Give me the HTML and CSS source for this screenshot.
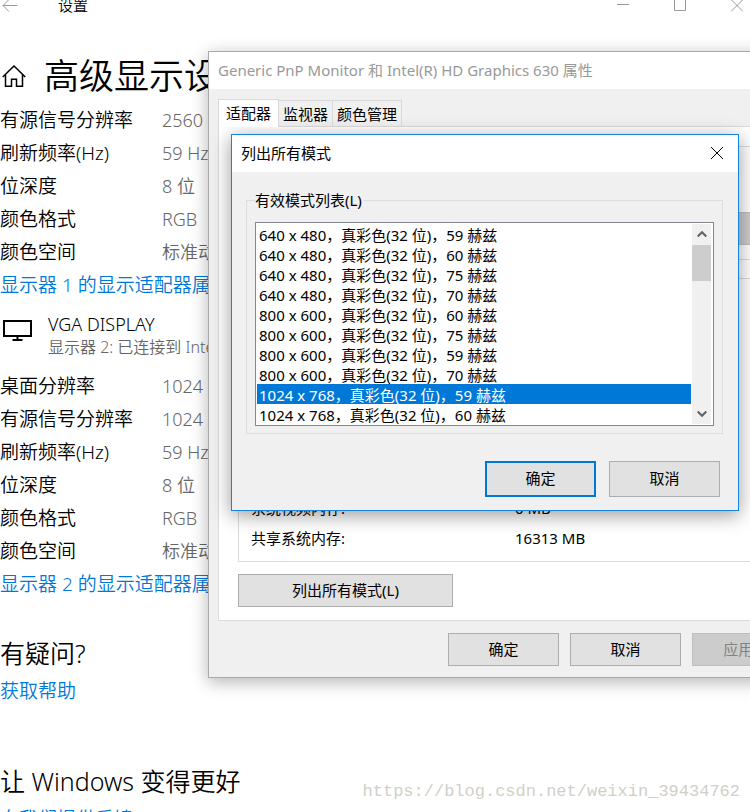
FILE: index.html
```
<!DOCTYPE html>
<html lang="zh-CN">
	<head>
		<meta charset="utf-8">
		<title>设置</title>
		<link rel="stylesheet" href="styles.css">
	</head>
	<body>
		<div class="desktop">
			<!-- 设置窗口 -->
			<main class="settings">
				<header class="settings-bar">
					<button class="icon-btn back" type="button" aria-label="返回">
						<svg width="16" height="13" viewBox="0 0 16 13"><path d="M15.500 6.500H1M7 .5l-6 6 6 6"/></svg>
					</button>
					<span class="settings-name">设置</span>
					<div class="settings-ctrl">
						<button class="icon-btn" type="button" aria-label="最小化">
							<svg width="12" height="13" viewBox="0 0 12 13"><path d="M0 5.500h12"/></svg>
						</button>
						<button class="icon-btn" type="button" aria-label="最大化">
							<svg width="12" height="13" viewBox="0 0 12 13"><path d="M.5 .5h11v11H.5z"/></svg>
						</button>
						<button class="icon-btn" type="button" aria-label="关闭">
							<svg width="12" height="13" viewBox="0 0 12 13"><path d="M0 .5l12 12M12 .5l-12 12"/></svg>
						</button>
					</div>
				</header>
				<h1 class="page-title">
					<svg width="24" height="22" viewBox="0 0 24 22"><path d="M.7 12L12 1l11.300 11M3.500 9.500v11.700h6v-7h5v7h6V9.500"/></svg>
					高级显示设置
				</h1>
				<dl class="info">
					<dt>有源信号分辨率</dt><dd>2560 × 1440</dd>
					<dt>刷新频率(Hz)</dt><dd>59 Hz</dd>
					<dt>位深度</dt><dd>8 位</dd>
					<dt>颜色格式</dt><dd>RGB</dd>
					<dt>颜色空间</dt><dd>标准动态范围(SDR)</dd>
				</dl>
				<a class="link" href="#">显示器 1 的显示适配器属性</a>
				<section class="device">
					<svg width="30" height="22" viewBox="0 0 30 22"><path d="M1 1h27v15H1zM14.500 16v4M9.500 20h10"/></svg>
					<div>
						<h2 class="device-name">VGA DISPLAY</h2>
						<p class="device-desc">显示器 2: 已连接到 Intel(R) HD Graphics 630</p>
					</div>
				</section>
				<dl class="info">
					<dt>桌面分辨率</dt><dd>1024 × 768</dd>
					<dt>有源信号分辨率</dt><dd>1024 × 768</dd>
					<dt>刷新频率(Hz)</dt><dd>59 Hz</dd>
					<dt>位深度</dt><dd>8 位</dd>
					<dt>颜色格式</dt><dd>RGB</dd>
					<dt>颜色空间</dt><dd>标准动态范围(SDR)</dd>
				</dl>
				<a class="link" href="#">显示器 2 的显示适配器属性</a>
				<section class="more">
					<h2>有疑问?</h2>
					<a class="link" href="#">获取帮助</a>
				</section>
				<section class="more">
					<h2>让 Windows 变得更好</h2>
					<a class="link" href="#">向我们提供反馈</a>
				</section>
			</main>

			<!-- 显示器属性窗口 -->
			<section class="window props">
				<header class="title-bar">Generic PnP Monitor 和 Intel(R) HD Graphics 630 属性</header>
				<div class="props-body">
					<nav class="tabs">
						<button class="tab active" type="button">适配器</button>
						<button class="tab" type="button">监视器</button>
						<button class="tab" type="button">颜色管理</button>
					</nav>
					<div class="panel">
						<div class="group group-type">
							<button class="btn" type="button" disabled aria-label="属性"></button>
						</div>
						<div class="group group-info">
							<dl class="memory">
								<dt>系统视频内存:</dt><dd>0 MB</dd>
								<dt>共享系统内存:</dt><dd>16313 MB</dd>
							</dl>
						</div>
						<button class="btn btn-wide" type="button">列出所有模式(L)</button>
					</div>
					<footer class="props-footer">
						<button class="btn" type="button">确定</button>
						<button class="btn" type="button">取消</button>
						<button class="btn" type="button" disabled>应用(A)</button>
					</footer>
				</div>
			</section>

			<!-- 列出所有模式 -->
			<section class="window modes">
				<header class="title-bar">
					列出所有模式
					<button class="icon-btn" type="button" aria-label="关闭">
						<svg width="12" height="12" viewBox="0 0 12 12"><path d="M0 0l12 12M12 0L0 12"/></svg>
					</button>
				</header>
				<form class="modes-body">
					<fieldset class="mode-group">
						<legend><label for="mode">有效模式列表(L)</label></legend>
						<div class="list-box">
							<select id="mode" class="list" size="10">
								<option>640 x 480，真彩色(32 位)，59 赫兹</option>
								<option>640 x 480，真彩色(32 位)，60 赫兹</option>
								<option>640 x 480，真彩色(32 位)，75 赫兹</option>
								<option>640 x 480，真彩色(32 位)，70 赫兹</option>
								<option>800 x 600，真彩色(32 位)，60 赫兹</option>
								<option>800 x 600，真彩色(32 位)，75 赫兹</option>
								<option>800 x 600，真彩色(32 位)，59 赫兹</option>
								<option>800 x 600，真彩色(32 位)，70 赫兹</option>
								<option selected>1024 x 768，真彩色(32 位)，59 赫兹</option>
								<option>1024 x 768，真彩色(32 位)，60 赫兹</option>
							</select>
							<div class="scroll">
								<svg width="10" height="8" viewBox="0 0 10 8"><path d="M.7 6.500L5 2.200l4.300 4.300"/></svg>
								<div class="thumb"></div>
								<svg width="10" height="8" viewBox="0 0 10 8"><path d="M.7 1.500L5 5.800l4.300-4.300"/></svg>
							</div>
						</div>
					</fieldset>
					<div class="modes-footer">
						<button class="btn default" type="button">确定</button>
						<button class="btn" type="button">取消</button>
					</div>
				</form>
			</section>

			<p class="watermark">https://blog.csdn.net/weixin_39434762</p>
		</div>
	</body>
</html>
```
FILE: styles.css
```
*{
	margin: 0;
	padding: 0;
	box-sizing: border-box;
}
body{
	font: 15px/20px "Noto Sans", "Noto Sans CJK SC", sans-serif;
	font-weight: 350;
	color: #000;
	background-color: #fff;
}
button, select{
	font: inherit;
	color: inherit;
}
svg{
	display: block;
	flex: none;
	fill: none;
	stroke: currentColor;
}
.desktop{
	position: relative;
	height: 100vh;
	overflow: hidden;
}
.icon-btn{
	border: none;
	background: none;
}

/* 设置窗口 */
.settings{
	font-size: 18px;
	line-height: 33px;
}
.settings-bar{
	display: flex;
	align-items: center;
	height: 11px;
	font-size: 15px;
}
.settings-bar .icon-btn{
	color: #999;
}
.settings-bar .back{
	margin-left: 2px;
}
.settings-name{
	margin-left: 40px;
}
.settings-ctrl{
	display: flex;
	gap: 45px;
	margin-left: auto;
	padding-right: 7px;
}
.page-title{
	display: flex;
	align-items: center;
	gap: 18px;
	margin-top: 39px;
	padding: 0 0 2px 2px;
	font-size: 35px;
	font-weight: 350;
	line-height: 52px;
	white-space: nowrap;
}
.page-title svg{
	stroke-width: 1.5;
}
.info{
	display: grid;
	grid-template-columns: 162px 1fr;
}
.info dt{
	font-size: 19px;
}
.info dd{
	color: #666;
}
.link{
	display: block;
	font-size: 19px;
	color: #0078d7;
	text-decoration: none;
}
.device{
	display: flex;
	gap: 15px;
	padding: 10px 0 11px 3px;
}
.device svg{
	margin-top: 8px;
	stroke-width: 2;
}
.device-name{
	font-size: 18px;
	font-weight: 350;
	line-height: 24px;
}
.device-desc{
	font-size: 16px;
	line-height: 23px;
	color: #666;
}
.more{
	padding-top: 33px;
}
.more + .more{
	padding-top: 52px;
}
.more h2{
	font-size: 25px;
	font-weight: 350;
	line-height: 38px;
}
.more .link{
	line-height: 38px;
}

/* 窗口公共样式 */
.window{
	position: absolute;
	font-weight: 400;
	background-color: #f0f0f0;
}
.title-bar{
	display: flex;
	align-items: center;
	justify-content: space-between;
	height: 37px;
	padding: 0 15px 2px 9px;
	background-color: #fff;
}
.btn{
	width: 111px;
	height: 33px;
	padding-bottom: 2px;
	border: 1px solid #adadad;
	background-color: #e1e1e1;
}
.btn:disabled{
	border-color: #bfbfbf;
	background-color: #ccc;
	color: #838383;
}

/* 显示器属性窗口 */
.props{
	top: 51px;
	left: 208px;
	width: 605px;
	border: 1px solid #aaa;
	box-shadow: 0 4px 16px rgba(0,0,0,.3);
}
.props .title-bar{
	color: #999;
}
.props-body{
	padding: 10px 9px 11px;
}
.tabs{
	display: flex;
	align-items: flex-end;
}
.tab{
	height: 26px;
	padding: 0 4px;
	border: 1px solid #d9d9d9;
	border-bottom: none;
	border-left: none;
	background-color: #f0f0f0;
}
.tab.active{
	height: 28px;
	margin-bottom: -1px;
	padding: 0 7px 2px;
	border-left: 1px solid #d9d9d9;
	background-color: #fff;
	z-index: 1;
}
.panel{
	padding: 19px 19px 13px;
	border: 1px solid #dcdcdc;
	background-color: #fff;
}
.group{
	display: flex;
	border: 1px solid #dcdcdc;
}
.group-type{
	justify-content: flex-end;
	align-items: flex-end;
	height: 114px;
	margin-bottom: 18px;
	padding: 0 12px 14px;
}
.group-info{
	align-items: flex-end;
	height: 284px;
	margin-bottom: 12px;
	padding: 0 12px 8px;
}
.memory{
	display: grid;
	grid-template-columns: 264px 1fr;
	line-height: 30px;
}
.btn-wide{
	display: block;
	width: 215px;
}
.props-footer{
	display: flex;
	justify-content: flex-end;
	gap: 11px;
	padding-top: 12px;
}

/* 列出所有模式 */
.modes{
	top: 134px;
	left: 231px;
	width: 508px;
	border: 1px solid #1883d7;
	box-shadow: 0 4px 18px rgba(0,0,0,.4);
}
.modes-body{
	padding: 18px 15px 13px 14px;
}
.mode-group{
	padding: 12px 8px 7px;
	border: 1px solid #dcdcdc;
}
.mode-group legend{
	padding: 0 2px 0 0;
}
.list-box{
	display: flex;
	padding: 1px;
	border: 1px solid #828790;
	background-color: #fff;
}
.list{
	flex: 1;
	min-width: 0;
	height: 200px;
	border: none;
	outline: none;
	background-color: #fff;
	overflow: hidden;
	scrollbar-width: none;
}
.list option{
	height: 20px;
	min-height: 20px;
	padding: 0 2px;
}
.list option:checked{
	background: linear-gradient(#0078d7, #0078d7);
	-webkit-text-fill-color: #fff;
}
.scroll{
	display: flex;
	flex-direction: column;
	align-items: center;
	width: 19px;
	margin: 0 1px;
	padding: 6px 0;
	background-color: #f0f0f0;
	color: #606060;
}
.scroll svg{
	stroke-width: 2;
}
.thumb{
	width: 100%;
	height: 36px;
	margin: 7px 0 auto;
	background-color: #cdcdcd;
}
.modes-footer{
	display: flex;
	justify-content: flex-end;
	gap: 13px;
	padding: 27px 3px 0 0;
}
.modes-footer .btn{
	height: 36px;
}
.btn.default{
	border: 2px solid #0078d7;
}

.watermark{
	position: absolute;
	right: 10px;
	bottom: 10px;
	font: 17px/20px "Liberation Mono", monospace;
	color: #d0d0c8;
}
```
